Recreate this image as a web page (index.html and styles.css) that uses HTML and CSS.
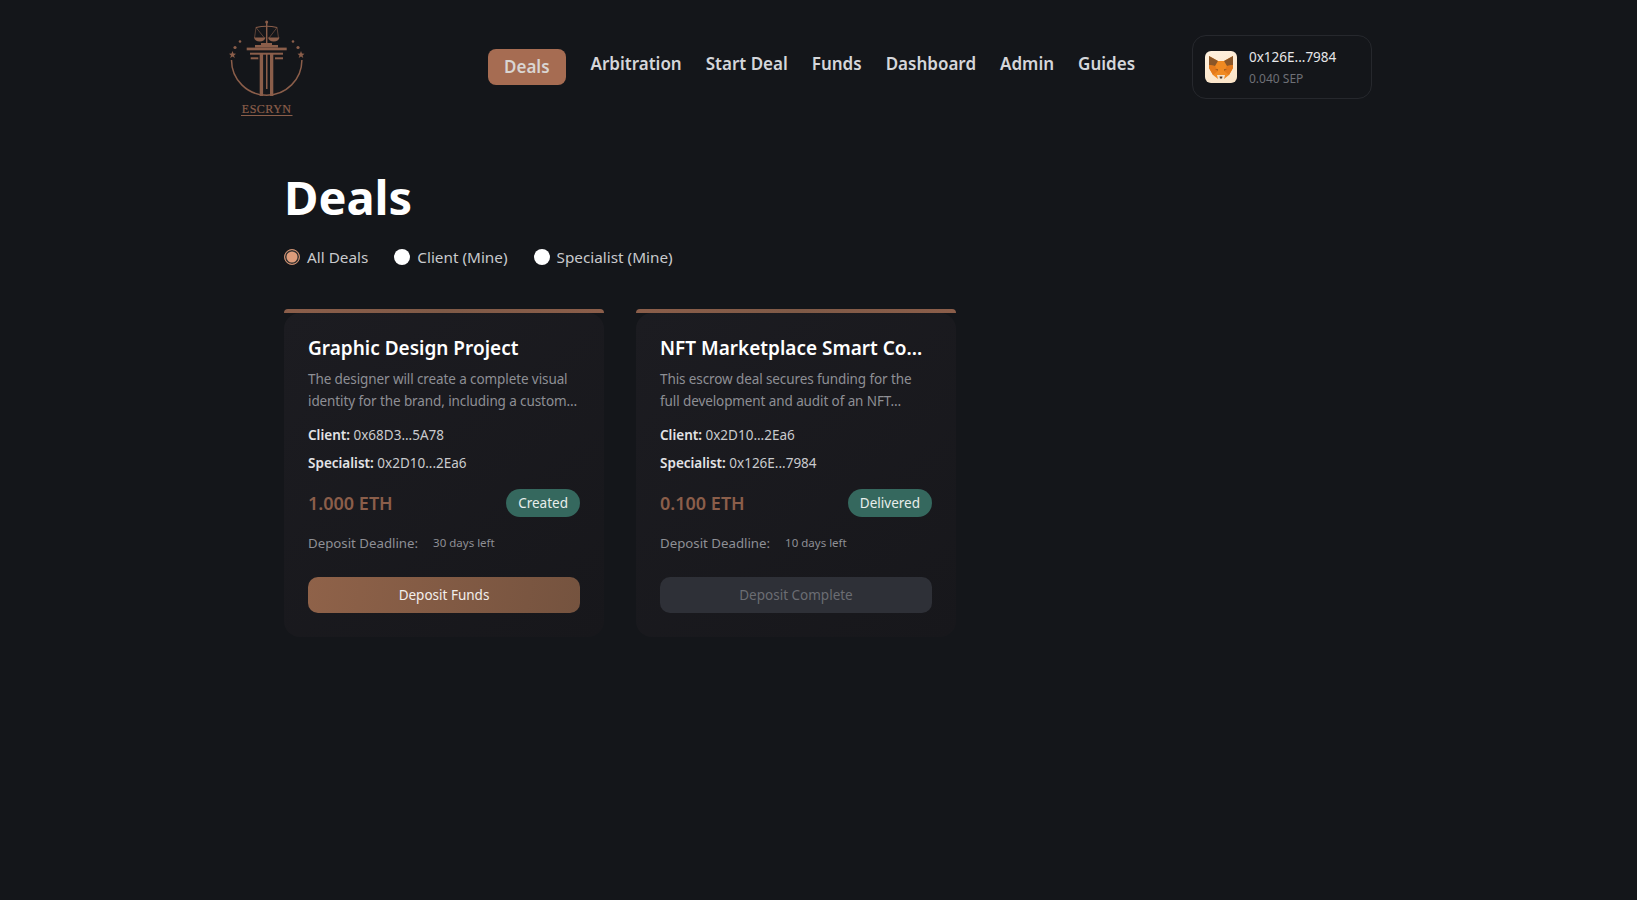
FILE: index.html
```html
<!DOCTYPE html>
<html lang="en">
<head>
    <meta charset="UTF-8">
    <meta name="viewport" content="width=device-width, initial-scale=1.0">
    <title>Escryn - Deals</title>
    <link rel="stylesheet" href="styles.css">
</head>
<body>
    <header class="topbar">
        <a class="logo" href="#" aria-label="Escryn">
            <svg class="logo-mark" viewBox="0 0 80 100" width="80" height="100">
                <g fill="none" stroke="#8b5e4a">
                    <path d="M5.5 42 A35.2 35.2 0 0 0 75.9 42" stroke-width="1.5"/>
                    <path d="M40.7 4 V27" stroke-width="1.4"/>
                    <path d="M30 9.5 Q40.7 7 51 9.5" stroke-width="1.1"/>
                    <path d="M30 9.5 L28.5 20 M30 9.5 L38.5 20 M51 9.5 L43 20 M51 9.5 L52.5 20" stroke-width=".6"/>
                </g>
                <g fill="#8b5e4a">
                    <circle cx="40.7" cy="4" r="1.5"/>
                    <path d="M28 19.5 H39.5 Q38.5 23.5 33.7 23.5 Q29 23.5 28 19.5Z"/>
                    <path d="M42 19.5 H53.5 Q52.5 23.5 47.7 23.5 Q43 23.5 42 19.5Z"/>
                    <rect x="35" y="25" width="11" height="2"/>
                    <rect x="29" y="27" width="23" height="2.6"/>
                    <rect x="20.7" y="29.6" width="40" height="2.7"/>
                    <rect x="24" y="34.7" width="33" height="2"/>
                    <rect x="24.7" y="39.3" width="7.6" height="2"/>
                    <rect x="49" y="39.3" width="8" height="2"/>
                    <rect x="33.7" y="36" width="3.4" height="42"/>
                    <rect x="40" y="36" width="1.5" height="35"/>
                    <rect x="44" y="36" width="3.3" height="42"/>
                    <circle cx="9" cy="29.5" r="1.6"/>
                    <circle cx="14" cy="23.5" r="1.3"/>
                    <circle cx="72" cy="29.5" r="1.6"/>
                    <circle cx="67" cy="23.5" r="1.3"/>
                    <path d="M6.5 33 L7.5 35.6 L10 35.8 L8 37.4 L8.8 40 L6.5 38.5 L4.2 40 L5 37.4 L3 35.8 L5.5 35.6Z"/>
                    <path d="M75 33 L76 35.6 L78.5 35.8 L76.5 37.4 L77.3 40 L75 38.5 L72.7 40 L73.5 37.4 L71.5 35.8 L74 35.6Z"/>
                </g>
                <text class="logo-word" x="40.7" y="95">ESCRYN</text>
                <rect x="15" y="97" width="51.5" height="1" fill="#8b5e4a"/>
            </svg>
        </a>

        <nav class="main-nav">
            <a class="nav-link active" href="#">Deals</a>
            <a class="nav-link" href="#">Arbitration</a>
            <a class="nav-link" href="#">Start Deal</a>
            <a class="nav-link" href="#">Funds</a>
            <a class="nav-link" href="#">Dashboard</a>
            <a class="nav-link" href="#">Admin</a>
            <a class="nav-link" href="#">Guides</a>
        </nav>

        <div class="wallet">
            <div class="wallet-icon">
                <svg viewBox="0 0 32 32" width="32" height="32">
                    <polygon points="4,5 13,10 19,10 28,5 28,17 24,24 19,28 13,28 8,24 4,17" fill="#f08a22"/>
                    <polygon points="4,5 13,10 10,15 4,14" fill="#8a5628"/>
                    <polygon points="28,5 19,10 22,15 28,14" fill="#8a5628"/>
                    <polygon points="4,14 10,15 13,20 8,24 4,17" fill="#e47a1c"/>
                    <polygon points="28,14 22,15 19,20 24,24 28,17" fill="#e47a1c"/>
                    <polygon points="10,18 13,18 13,20" fill="#a8601f"/>
                    <polygon points="22,18 19,18 19,20" fill="#a8601f"/>
                    <polygon points="12,24 20,24 19,28 13,28" fill="#f4e2cc"/>
                    <polygon points="14.5,25.5 17.5,25.5 17,27.5 15,27.5" fill="#4a3a30"/>
                </svg>
            </div>
            <div class="wallet-info">
                <span class="wallet-address">0x126E...7984</span>
                <span class="wallet-balance">0.040 SEP</span>
            </div>
        </div>
    </header>

    <main class="page">
        <h1>Deals</h1>

        <div class="filters">
            <label class="filter"><input type="radio" name="filter" checked> All Deals</label>
            <label class="filter"><input type="radio" name="filter"> Client (Mine)</label>
            <label class="filter"><input type="radio" name="filter"> Specialist (Mine)</label>
        </div>

        <div class="deals">
            <article class="deal">
                <div class="deal-bar"></div>
                <div class="deal-body">
                    <h3>Graphic Design Project</h3>
                    <p class="deal-desc">The designer will create a complete visual identity for the brand, including a custom…</p>
                    <p class="deal-party"><strong>Client:</strong> 0x68D3...5A78</p>
                    <p class="deal-party"><strong>Specialist:</strong> 0x2D10...2Ea6</p>
                    <div class="deal-row">
                        <span class="deal-price">1.000 ETH</span>
                        <span class="badge">Created</span>
                    </div>
                    <div class="deal-deadline">
                        <span>Deposit Deadline:</span>
                        <span class="days-left">30 days left</span>
                    </div>
                    <button class="btn">Deposit Funds</button>
                </div>
            </article>

            <article class="deal">
                <div class="deal-bar"></div>
                <div class="deal-body">
                    <h3>NFT Marketplace Smart Co…</h3>
                    <p class="deal-desc">This escrow deal secures funding for the full development and audit of an NFT…</p>
                    <p class="deal-party"><strong>Client:</strong> 0x2D10...2Ea6</p>
                    <p class="deal-party"><strong>Specialist:</strong> 0x126E...7984</p>
                    <div class="deal-row">
                        <span class="deal-price">0.100 ETH</span>
                        <span class="badge">Delivered</span>
                    </div>
                    <div class="deal-deadline">
                        <span>Deposit Deadline:</span>
                        <span class="days-left">10 days left</span>
                    </div>
                    <button class="btn" disabled>Deposit Complete</button>
                </div>
            </article>
        </div>
    </main>
</body>
</html>
```

FILE: styles.css
```css
* {
    margin: 0;
    padding: 0;
    box-sizing: border-box;
}

body {
    font-family: "Noto Sans", Arial, sans-serif;
    background: #14161a;
    color: #fff;
    min-height: 100vh;
}

/* Header */
.topbar {
    display: flex;
    align-items: flex-start;
    padding: 18px 265px 0 226px;
    height: 118px;
}

.logo {
    display: block;
    width: 80px;
    height: 100px;
}

.logo-word {
    font-family: "Liberation Serif", serif;
    font-size: 12px;
    letter-spacing: .5px;
    fill: #8b5e4a;
    stroke: #8b5e4a;
    stroke-width: .2;
    text-anchor: middle;
}

.main-nav {
    display: flex;
    align-items: center;
    gap: 24px;
    margin-left: 182px;
    margin-top: 31px;
}

.nav-link {
    color: #d5d6da;
    text-decoration: none;
    font-size: 17px;
    font-weight: 600;
    line-height: 28px;
    margin-top: -6px;
}

.nav-link.active {
    background: #a66c52;
    color: #d9d5d2;
    padding: 4px 16px;
    border-radius: 8px;
    margin-top: 0;
    margin-right: 1px;
}

.wallet {
    display: flex;
    align-items: center;
    gap: 12px;
    margin-left: auto;
    margin-top: 17px;
    width: 180px;
    height: 64px;
    padding: 0 12px;
    border: 1px solid #26282d;
    border-radius: 14px;
}

.wallet-icon {
    width: 32px;
    height: 32px;
    background: linear-gradient(160deg, #fff1df, #fae3c6);
    border-radius: 6px;
    flex-shrink: 0;
}

.wallet-info {
    display: flex;
    flex-direction: column;
    gap: 4px;
    padding-bottom: 1px;
}

.wallet-address {
    font-size: 13.5px;
    line-height: 20px;
    color: #e6e6e8;
}

.wallet-balance {
    font-size: 12px;
    line-height: 16px;
    color: #6e7076;
}

/* Page */
.page {
    padding: 47px 284px 0;
}

h1 {
    font-size: 47px;
    font-weight: 700;
    line-height: 64px;
}

.filters {
    display: flex;
    gap: 26px;
    margin-top: 16px;
    margin-bottom: 40px;
}

.filter {
    display: flex;
    align-items: center;
    gap: 7px;
    font-size: 15.3px;
    line-height: 24px;
    color: #c9cacd;
}

.filter input {
    appearance: none;
    width: 16px;
    height: 16px;
    background: #fff;
    border-radius: 50%;
}

.filter input:checked {
    background: #dd9c7b;
    border: 1px solid #c98d6f;
    box-shadow: inset 0 0 0 1.5px #33302f;
}

.deals {
    display: flex;
    gap: 32px;
}

.deal {
    width: 320px;
}

.deal-bar {
    height: 4px;
    background: linear-gradient(90deg, #8b5e4a, #7f5a47 50%, #8b5e4a);
    border-radius: 4px 4px 0 0;
}

.deal-body {
    background: linear-gradient(145deg, #1c1c21, #17171b);
    border-radius: 16px;
    padding: 21px 24px 24px;
    height: 324px;
}

.deal-body h3 {
    font-size: 19px;
    font-weight: 600;
    line-height: 28px;
    white-space: nowrap;
}

.deal-desc {
    font-size: 13.5px;
    letter-spacing: -.1px;
    line-height: 22px;
    color: #8e8f95;
    margin-top: 6px;
}

.deal-party {
    font-size: 13.5px;
    line-height: 20px;
    color: #c9cacd;
    margin-top: 8px;
}

.deal-desc + .deal-party {
    margin-top: 13px;
}

.deal-party strong {
    color: #e3e3e6;
    font-weight: 600;
}

.deal-row {
    display: flex;
    align-items: center;
    justify-content: space-between;
    margin-top: 16px;
}

.deal-price {
    font-size: 18px;
    font-weight: 600;
    color: #8b5e4a;
}

.badge {
    background: #35685e;
    color: #e8eeec;
    font-size: 13.5px;
    line-height: 28px;
    padding: 0 12px;
    border-radius: 14px;
}

.deal-deadline {
    display: flex;
    align-items: center;
    gap: 15px;
    margin-top: 16px;
    font-size: 13.25px;
    line-height: 20px;
    color: #8e8f95;
}

.days-left {
    font-size: 11.5px;
}

.btn {
    display: block;
    width: 100%;
    height: 36px;
    margin-top: 24px;
    border: none;
    border-radius: 10px;
    font-family: inherit;
    font-size: 13.5px;
    color: #f3efec;
    background: linear-gradient(100deg, #8f6249, #75533f);
    cursor: pointer;
}

.btn:disabled {
    background: #2e3037;
    color: #6b6d73;
    cursor: default;
}
```
